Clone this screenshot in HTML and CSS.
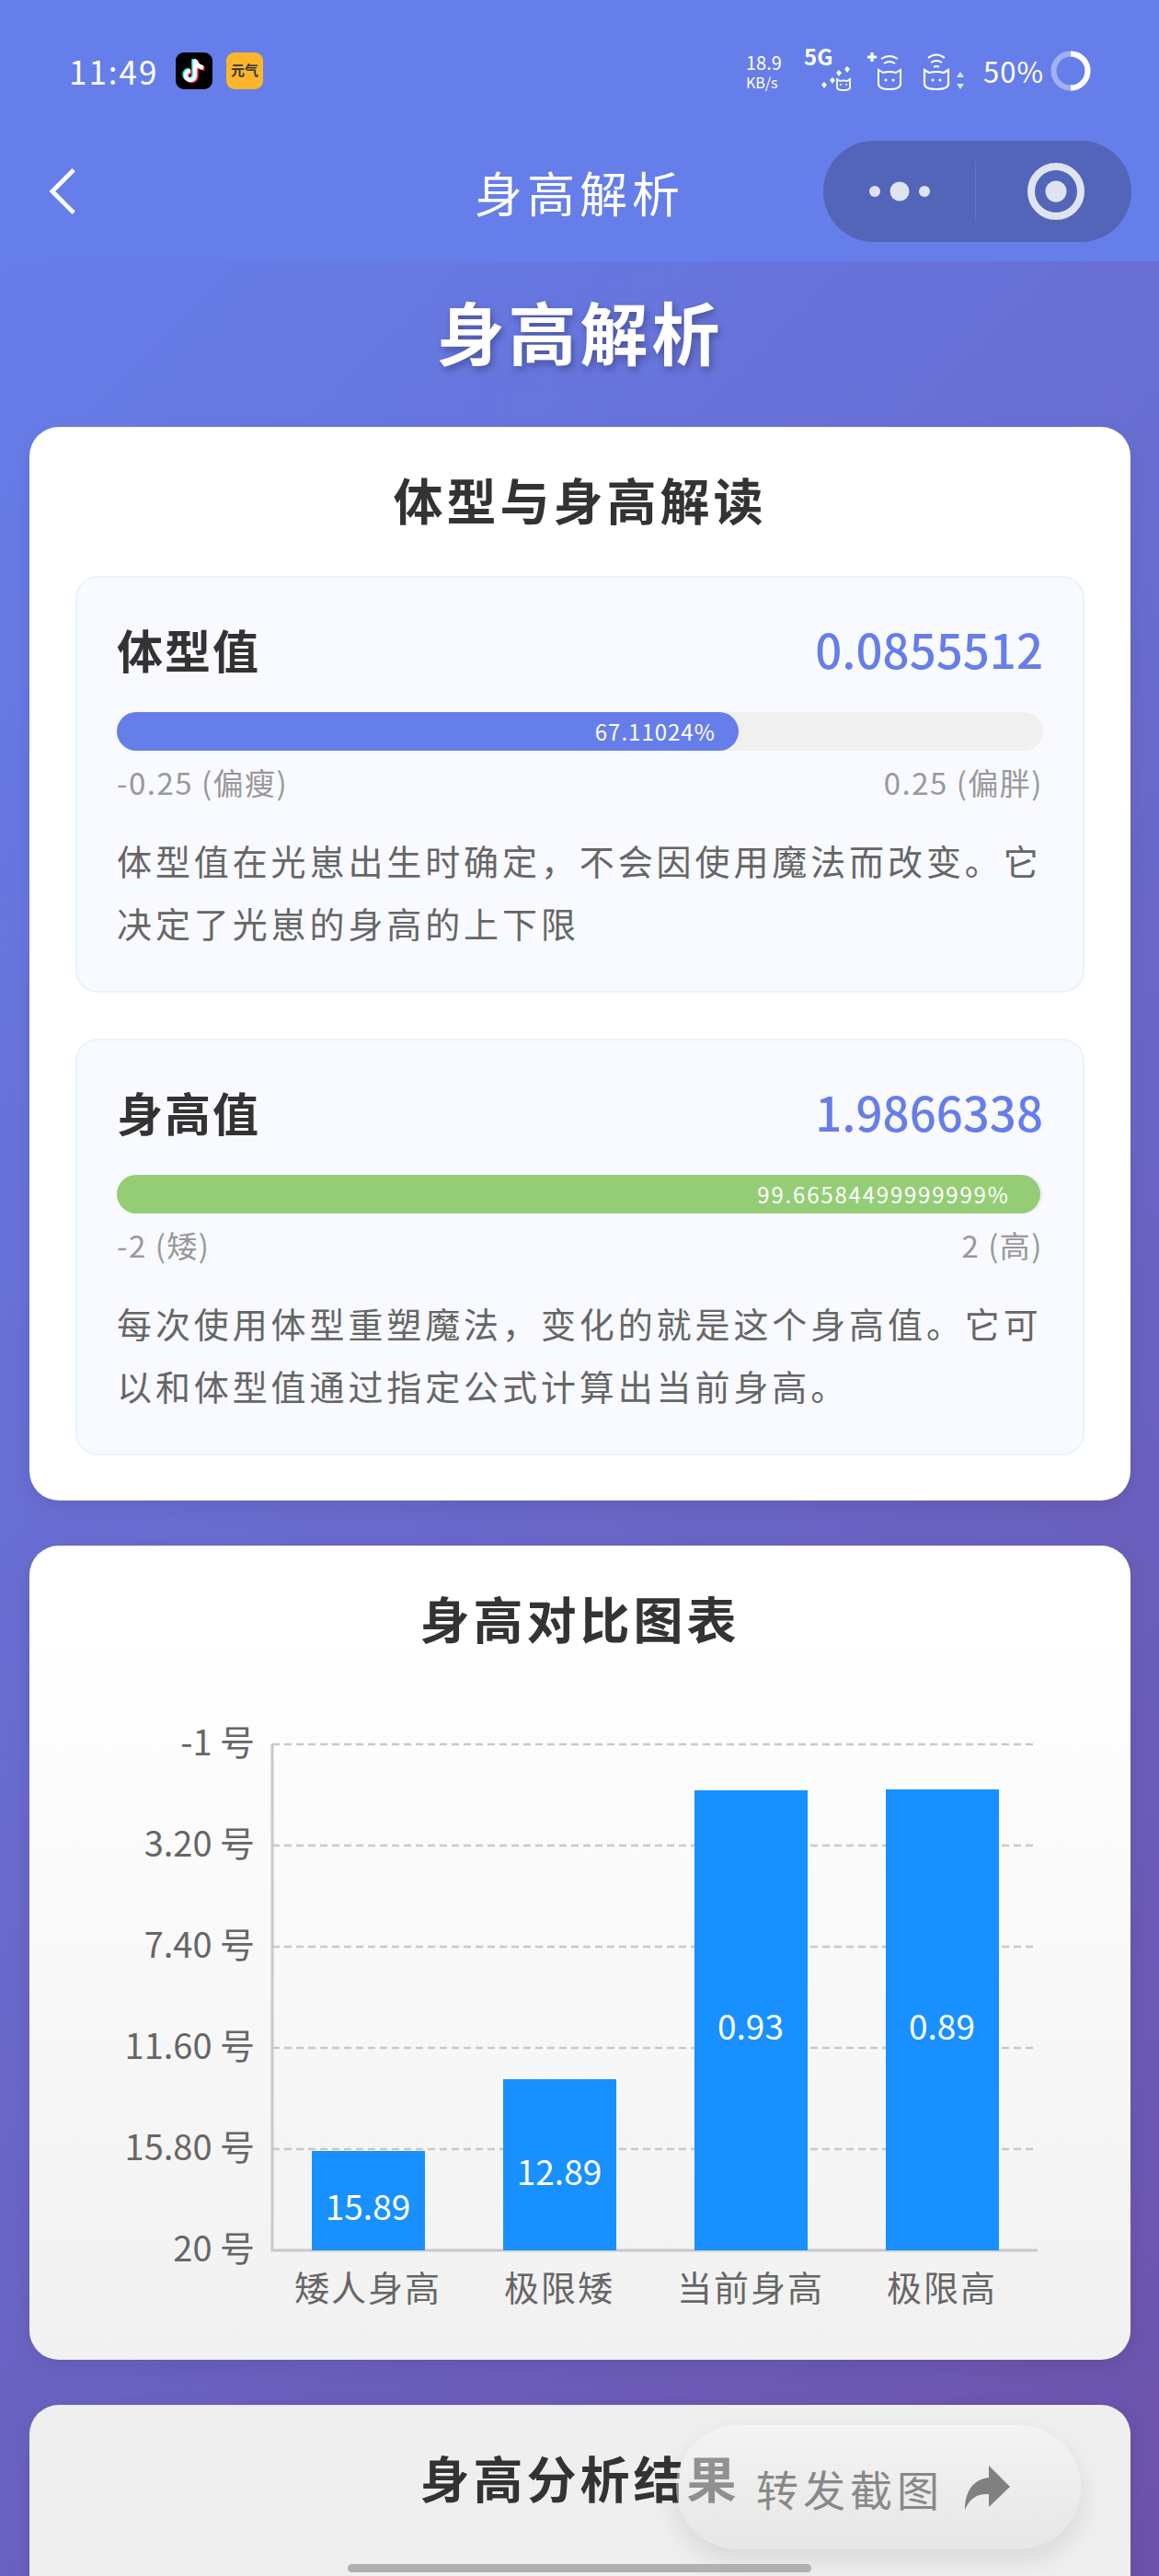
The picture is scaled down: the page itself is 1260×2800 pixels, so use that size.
FILE: index.html
```html
<!DOCTYPE html>
<html lang="zh-CN">
<head>
    <meta charset="UTF-8">
    <meta name="viewport" content="width=device-width, initial-scale=1.0">
    <title>身高解析</title>
    <link rel="stylesheet" href="styles.css">
</head>
<body>
<div class="page">
    <header class="top">
        <div class="status-bar">
            <div class="status-left">
                <span class="time">11:49</span>
                <svg class="app-icon" viewBox="0 0 40 40">
                    <rect width="40" height="40" rx="9" fill="#000"/>
                    <path d="M21 8v17a5 5 0 1 1-5-5M21 8c1 5 4 8 9 8.500" fill="none" stroke="#25f4ee" stroke-width="4.500" transform="translate(-1.500 -1)"/>
                    <path d="M21 8v17a5 5 0 1 1-5-5M21 8c1 5 4 8 9 8.500" fill="none" stroke="#fe2c55" stroke-width="4.500" transform="translate(1.500 1)"/>
                    <path d="M21 8v17a5 5 0 1 1-5-5M21 8c1 5 4 8 9 8.500" fill="none" stroke="#fff" stroke-width="4.500"/>
                </svg>
                <span class="app-yuanqi">元气</span>
            </div>
            <div class="status-right">
                <div class="net-speed"><span>18.9</span><span class="net-unit">KB/s</span></div>
                <div class="signal-one">
                    <span class="five-g">5G</span>
                    <svg class="cat-hearts" viewBox="0 0 36 28">
                        <path d="M2 21l3-3 3 3-3 4zM11 16l3-3 3 3-3 4zM18 8l3-3 3 3-3 4zM27 4l3-3 3 3-3 4z" fill="#fff"/>
                        <path d="M19 15l3 2q4-1 8 0l3-2v9q0 3-7 3t-7-3z" fill="none" stroke="#fff" stroke-width="1.800"/>
                        <circle cx="23" cy="21" r="1" fill="#fff"/><circle cx="29" cy="21" r="1" fill="#fff"/>
                    </svg>
                </div>
                <svg class="cat-plus" viewBox="0 0 40 44">
                    <path d="M2 7h10M7 2v10" stroke="#fff" stroke-width="3"/>
                    <path d="M17 9q9-6 18 0M20 14q6-4 12 0" fill="none" stroke="#fff" stroke-width="2"/>
                    <path d="M14 21l5 3q7-2 14 0l5-3v15q0 6-12 6t-12-6z" fill="none" stroke="#fff" stroke-width="2"/>
                    <circle cx="22" cy="32" r="1.500" fill="#fff"/><circle cx="30" cy="32" r="1.500" fill="#fff"/>
                </svg>
                <svg class="cat-wifi" viewBox="0 0 50 44">
                    <path d="M6 8q9-7 18 0M9 13q6-4 12 0M12 18q3-2 6 0" fill="none" stroke="#fff" stroke-width="2"/>
                    <path d="M2 21l5 3q8-2 16 0l5-3v15q0 6-13 6t-13-6z" fill="none" stroke="#fff" stroke-width="2.200"/>
                    <circle cx="11" cy="32" r="1.500" fill="#fff"/><circle cx="19" cy="32" r="1.500" fill="#fff"/>
                    <path d="M41 23l4 6h-8zM41 42l4-6h-8z" fill="#fff" opacity="0.800"/>
                </svg>
                <span class="battery-text">50%</span>
                <svg class="battery-ring" viewBox="0 0 44 44">
                    <circle cx="22" cy="22" r="18.500" fill="none" stroke="#fff" stroke-opacity="0.400" stroke-width="6"/>
                    <path d="M22 3.500a18.500 18.500 0 0 1 0 37" fill="none" stroke="#fff" stroke-width="6"/>
                </svg>
            </div>
        </div>
        <nav class="nav-bar">
            <svg class="back-icon" viewBox="0 0 32 54">
                <path d="M29 2L4 27l25 25" fill="none" stroke="#fff" stroke-width="5"/>
            </svg>
            <div class="nav-title">身高解析</div>
            <div class="capsule">
                <div class="capsule-part">
                    <svg class="capsule-dots" viewBox="0 0 68 24">
                        <circle cx="7" cy="12" r="6"/><circle cx="34" cy="12" r="10.500"/><circle cx="61" cy="12" r="6"/>
                    </svg>
                </div>
                <div class="capsule-line"></div>
                <div class="capsule-part capsule-right">
                    <svg class="capsule-target" viewBox="0 0 64 64">
                        <circle cx="32" cy="32" r="27" fill="none" stroke="#e0e3f2" stroke-width="8"/>
                        <circle cx="32" cy="32" r="11.500" fill="#e0e3f2"/>
                    </svg>
                </div>
            </div>
        </nav>
    </header>

    <main class="main">
        <h1 class="page-title">身高解析</h1>

        <section class="card">
            <h2 class="card-title">体型与身高解读</h2>
            <div class="stat-box">
                <div class="stat-head">
                    <span class="stat-name">体型值</span>
                    <span class="stat-value">0.0855512</span>
                </div>
                <div class="bar-track">
                    <div class="bar-fill bar-blue" style="width: 67.11024%">67.11024%</div>
                </div>
                <div class="bar-range"><span>-0.25 (偏瘦)</span><span>0.25 (偏胖)</span></div>
                <p class="stat-desc">体型值在光崽出生时确定，不会因使用魔法而改变。它决定了光崽的身高的上下限</p>
            </div>
            <div class="stat-box">
                <div class="stat-head">
                    <span class="stat-name">身高值</span>
                    <span class="stat-value">1.9866338</span>
                </div>
                <div class="bar-track">
                    <div class="bar-fill bar-green" style="width: 99.66584%">99.66584499999999%</div>
                </div>
                <div class="bar-range"><span>-2 (矮)</span><span>2 (高)</span></div>
                <p class="stat-desc">每次使用体型重塑魔法，变化的就是这个身高值。它可以和体型值通过指定公式计算出当前身高。</p>
            </div>
        </section>

        <section class="card card-chart">
            <h2 class="card-title">身高对比图表</h2>
            <svg class="chart" viewBox="0 0 1097 670">
                <g class="grid">
                    <line x1="214" x2="1046" y1="50" y2="50"/>
                    <line x1="214" x2="1046" y1="160" y2="160"/>
                    <line x1="214" x2="1046" y1="270" y2="270"/>
                    <line x1="214" x2="1046" y1="380" y2="380"/>
                    <line x1="214" x2="1046" y1="490" y2="490"/>
                </g>
                <path class="axis" d="M214 50V600H1046"/>
                <g class="bars">
                    <rect x="257" y="492" width="123" height="108"/>
                    <rect x="465" y="414" width="123" height="186"/>
                    <rect x="673" y="100" width="123" height="500"/>
                    <rect x="881" y="99" width="123" height="501"/>
                </g>
                <g class="y-labels">
                    <text x="195" y="45">-1 号</text>
                    <text x="195" y="155">3.20 号</text>
                    <text x="195" y="265">7.40 号</text>
                    <text x="195" y="375">11.60 号</text>
                    <text x="195" y="485">15.80 号</text>
                    <text x="195" y="595">20 号</text>
                </g>
                <g class="bar-labels">
                    <text x="318" y="551">15.89</text>
                    <text x="526" y="513">12.89</text>
                    <text x="734" y="355">0.93</text>
                    <text x="942" y="355">0.89</text>
                </g>
                <g class="x-labels">
                    <text x="318" y="638">矮人身高</text>
                    <text x="526" y="638">极限矮</text>
                    <text x="734" y="638">当前身高</text>
                    <text x="942" y="638">极限高</text>
                </g>
            </svg>
        </section>

        <section class="card card-result">
            <h2 class="card-title">身高分析结果</h2>
        </section>
    </main>

    <div class="share-btn">
        <span>转发截图</span>
        <svg class="share-icon" viewBox="0 0 50 48">
            <path d="M27 0l23 23-23 22V31C14 30 6 36 1 48 1 28 10 15 27 13z" fill="#808080"/>
        </svg>
    </div>
    <div class="home-bar"></div>
</div>
</body>
</html>
```

FILE: styles.css
```css
body {
    margin: 0;
    font-family: "Noto Sans CJK SC", "Noto Sans", sans-serif;
    color: #333;
}

.page {
    position: relative;
    width: 1260px;
    height: 2800px;
    overflow: hidden;
}

.top {
    background-color: #667eea;
    color: white;
}

.status-bar {
    height: 153px;
    padding: 0 74px 0 75px;
    display: flex;
    align-items: center;
    justify-content: space-between;
}

.status-left {
    display: flex;
    align-items: center;
}

.time {
    font-size: 35px;
    letter-spacing: 2px;
    width: 116px;
}

.app-icon {
    width: 40px;
    height: 40px;
    margin-right: 15px;
}

.app-yuanqi {
    width: 40px;
    height: 40px;
    border-radius: 9px;
    background-color: #fbb62c;
    color: #333;
    font-size: 15px;
    font-weight: 700;
    line-height: 38px;
    text-align: center;
    white-space: nowrap;
    overflow: hidden;
}

.status-right {
    display: flex;
    align-items: center;
}

.net-speed {
    width: 63px;
    display: flex;
    flex-direction: column;
    font-size: 20px;
    line-height: 24px;
}

.net-unit {
    font-size: 16px;
    line-height: 18px;
}

.signal-one {
    position: relative;
    width: 53px;
    height: 44px;
}

.five-g {
    font-size: 24px;
    font-weight: 700;
    line-height: 24px;
    display: block;
    margin-top: -6px;
}

.cat-hearts {
    position: absolute;
    left: 17px;
    top: 16px;
    width: 36px;
    height: 28px;
}

.cat-plus {
    width: 40px;
    height: 44px;
    margin-left: 14px;
}

.cat-wifi {
    width: 50px;
    height: 44px;
    margin-left: 22px;
}

.battery-text {
    font-size: 31px;
    line-height: 44px;
    width: 60px;
    margin-left: 16px;
    letter-spacing: 1px;
    white-space: nowrap;
}

.battery-ring {
    width: 44px;
    height: 44px;
    margin-left: 13px;
}

.nav-bar {
    height: 131px;
    padding: 0 30px 21px 53px;
    box-sizing: border-box;
    display: grid;
    grid-template-columns: 1fr auto 1fr;
    align-items: center;
}

.back-icon {
    width: 30px;
    height: 52px;
}

.nav-title {
    font-size: 52px;
    letter-spacing: 5px;
    margin-left: -23px;
}

.capsule {
    justify-self: end;
    width: 335px;
    height: 110px;
    border-radius: 55px;
    background-color: #5365b9;
    display: flex;
    align-items: center;
}

.capsule-part {
    flex: 1;
    display: flex;
    justify-content: center;
}

.capsule-right {
    padding-left: 4px;
}

.capsule-line {
    width: 1px;
    height: 66px;
    background-color: #6072c6;
}

.capsule-dots {
    width: 68px;
    height: 24px;
    fill: #e0e3f2;
}

.capsule-target {
    width: 64px;
    height: 64px;
}

.main {
    height: 2916px;
    padding: 0 31px 0 32px;
    background: linear-gradient(135deg, #667eea 0%, #6d4da3 100%);
}

.page-title {
    margin: 0;
    height: 180px;
    line-height: 150px;
    font-size: 74px;
    font-weight: 700;
    letter-spacing: 4px;
    text-align: center;
    color: white;
    text-shadow: 2px 4px 8px rgba(0, 0, 0, 0.3);
}

.card {
    background-color: white;
    border-radius: 32px;
    padding: 50px 50px 1px;
    margin-bottom: 49px;
    box-shadow: 0 6px 20px rgba(0, 0, 0, 0.08);
}

.card-chart {
    padding-bottom: 49px;
    background: linear-gradient(#fff 0%, #fff 10%, #f1f1f1 100%);
}

.card-result {
    height: 500px;
    background-color: #efefef;
}

.card-title {
    margin: -4px 0 50px;
    font-size: 54px;
    line-height: 66px;
    font-weight: 700;
    letter-spacing: 4px;
    text-align: center;
}

.stat-box {
    border: 2px solid #e8f4fb;
    border-radius: 24px;
    background-color: #f8faff;
    padding: 44px 43px 41px;
    margin-bottom: 50px;
    height: 453px;
    box-sizing: border-box;
}

.stat-box:last-child {
    margin-bottom: 48px;
}

.stat-head {
    display: flex;
    justify-content: space-between;
    align-items: center;
    height: 66px;
    margin-bottom: 36px;
}

.stat-name {
    font-size: 50px;
    font-weight: 700;
    letter-spacing: 2px;
}

.stat-value {
    font-size: 51px;
    font-weight: 500;
    color: #667eea;
}

.bar-track {
    height: 42px;
    border-radius: 21px;
    background-color: #f0f0f0;
}

.bar-fill {
    height: 100%;
    border-radius: 21px;
    box-sizing: border-box;
    padding-right: 25px;
    color: white;
    font-size: 24px;
    letter-spacing: 1px;
    line-height: 42px;
    text-align: right;
}

.bar-blue {
    background-color: #667eea;
}

.bar-green {
    background-color: #95cd77;
    padding-right: 33px;
    letter-spacing: 1.8px;
}

.bar-range {
    display: flex;
    justify-content: space-between;
    margin-top: 14px;
    font-size: 33px;
    letter-spacing: 1.5px;
    line-height: 40px;
    color: #999;
}

.stat-desc {
    margin: 31px 0 0;
    font-size: 38px;
    letter-spacing: 3.9px;
    line-height: 68px;
    color: #666;
}

.chart {
    display: block;
    width: 1097px;
    height: 670px;
    margin-top: 54px;
}

.grid line {
    stroke: #c9c9c9;
    stroke-width: 2.5;
    stroke-dasharray: 8 5;
}

.axis {
    fill: none;
    stroke: #c8c8c8;
    stroke-width: 3;
}

.bars rect {
    fill: #1890ff;
}

.chart text {
    dominant-baseline: central;
}

.y-labels text {
    font-size: 38px;
    fill: #666;
    text-anchor: end;
}

.bar-labels text {
    font-size: 37px;
    fill: white;
    text-anchor: middle;
}

.x-labels text {
    font-size: 38px;
    letter-spacing: 2px;
    fill: #666;
    text-anchor: middle;
}

.share-btn {
    position: absolute;
    left: 735px;
    top: 2636px;
    width: 440px;
    height: 135px;
    border-radius: 68px;
    box-sizing: border-box;
    padding-left: 87px;
    display: flex;
    align-items: center;
    background: linear-gradient(rgba(248, 248, 248, 0.5), rgba(222, 222, 222, 0.5));
    box-shadow: 0 12px 30px rgba(0, 0, 0, 0.1);
    color: #888;
    font-size: 46px;
    letter-spacing: 5px;
}

.share-icon {
    width: 50px;
    height: 48px;
    margin-left: 22px;
}

.home-bar {
    position: absolute;
    left: 378px;
    top: 2787px;
    width: 504px;
    height: 9px;
    border-radius: 5px;
    background-color: #b0b0b0;
}
```
